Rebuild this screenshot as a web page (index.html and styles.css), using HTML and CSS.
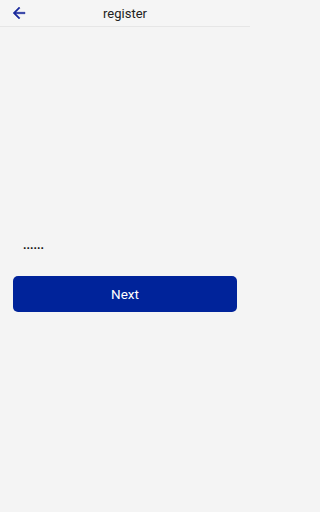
FILE: index.html
```html
<!DOCTYPE html>
<html>
<head>
<meta charset="utf-8">
<link rel="stylesheet" href="styles.css">
</head>
<body>
<div class="app">
  <header class="bar">
    <span class="back">
      <svg width="18" height="18" viewBox="0 0 24 24"><path d="M20 11H7.83l5.59-5.59L12 4l-8 8 8 8 1.41-1.41L7.83 13H20v-2z" fill="#1a2a9c" stroke="#1a2a9c" stroke-width="0.6"/></svg>
    </span>
    <span class="title">register</span>
  </header>
  <main class="content">
    <div class="field">......</div>
    <button class="next">Next</button>
  </main>
</div>
</body>
</html>
```
FILE: styles.css
```css
html, body { margin: 0; padding: 0; }
body { background: #f4f4f4; font-family: Roboto, "Noto Sans", sans-serif; }
.app { width: 250px; height: 512px; display: flex; flex-direction: column; }
.bar {
  height: 27px; box-sizing: border-box; border-bottom: 1px solid #e6e6e6;
  background: #f5f5f5; display: flex; align-items: center; justify-content: center;
  position: relative;
}
.back { position: absolute; left: 10px; top: 4px; width: 18px; height: 18px; display: flex; }
.title { font-size: 13px; color: #222; line-height: 1; }
.content { padding: 0 13px; display: flex; flex-direction: column; }
.field {
  margin-top: 211px; padding-left: 10px; height: 19px; font-size: 12px; font-weight: bold;
  color: #111; letter-spacing: 0; line-height: 14px;
}
.next {
  margin-top: 19px; height: 36px; border: none; border-radius: 5px; background: #00239a;
  color: #fff; font-family: Roboto, sans-serif; font-size: 13.5px; padding: 0;
}
```
